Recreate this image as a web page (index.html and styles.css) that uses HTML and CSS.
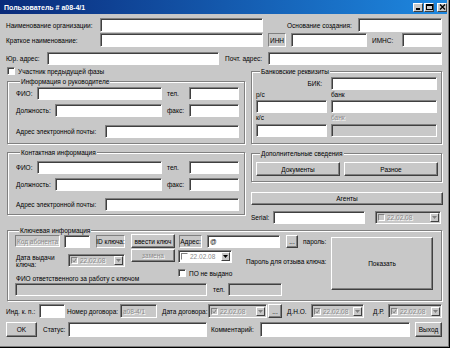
FILE: index.html
```html
<!DOCTYPE html>
<html>
<head>
<meta charset="utf-8">
<title>Пользователь</title>
<link rel="stylesheet" href="styles.css">
</head>
<body>
<div class="win">
  <div class="title">
    <span class="caption">Пользователь # а08-4/1</span>
    <div class="tbtns">
      <span class="tb"><svg width="7" height="6"><rect x="1" y="4" width="4" height="2" fill="#000"/></svg></span>
      <span class="tb"><svg width="7" height="6"><rect x="0.5" y="0.5" width="6" height="5" fill="none" stroke="#000"/><rect x="0" y="0" width="7" height="2" fill="#000"/></svg></span>
      <span class="tb close"><svg width="7" height="6"><path d="M1 0.5l5 5M6 0.5l-5 5" stroke="#000" stroke-width="1.3"/></svg></span>
    </div>
  </div>

  <div class="content">
    <div class="row top1">
      <span class="lb l-org">Наименование организации:</span>
      <span class="in i-org"></span>
      <span class="lb l-osn">Основание создания:</span>
      <span class="in i-osn"></span>
    </div>
    <div class="row top2">
      <span class="lb l-org">Краткое наименование:</span>
      <span class="in i-org"></span>
      <span class="box b-inn">ИНН</span>
      <span class="in i-inn"></span>
      <span class="lb l-imns">ИМНС:</span>
      <span class="in i-imns"></span>
    </div>
    <div class="row top3">
      <span class="lb l-jur">Юр. адрес:</span>
      <span class="in i-jur"></span>
      <span class="lb l-post">Почт. адрес:</span>
      <span class="in i-post"></span>
    </div>

    <div class="mid">
      <div class="lcol">
        <div class="chkrow"><span class="chk"></span><span class="lb">Участник предыдущей фазы</span></div>

        <div class="grp g-boss">
          <span class="lg">Информация о руководителе</span>
          <div class="row ga"><span class="lb l-fio">ФИО:</span><span class="in i-fio"></span><span class="lb l-tel">тел.</span><span class="in i-tel"></span></div>
          <div class="row gb"><span class="lb l-dol">Должность:</span><span class="in i-dol"></span><span class="lb l-tel">факс:</span><span class="in i-tel"></span></div>
          <div class="row gc"><span class="lb l-mail">Адрес электронной почты:</span><span class="in i-mail"></span></div>
        </div>

        <div class="grp g-cont">
          <span class="lg">Контактная информация</span>
          <div class="row ga"><span class="lb l-fio">ФИО:</span><span class="in i-fio"></span><span class="lb l-tel">тел.</span><span class="in i-tel"></span></div>
          <div class="row gb"><span class="lb l-dol">Должность:</span><span class="in i-dol"></span><span class="lb l-tel">факс:</span><span class="in i-tel"></span></div>
          <div class="row gc2"><span class="lb l-mail">Адрес электронной почты:</span><span class="in i-mail"></span></div>
        </div>
      </div>

      <div class="rcol">
        <div class="grp g-bank">
          <span class="lg">Банковские реквизиты</span>
          <div class="row bk-bik"><span class="lb l-bik">БИК:</span><span class="in i-bank"></span></div>
          <div class="bk-lbs"><span class="lb l-rs">р/с</span><span class="lb">банк</span></div>
          <div class="row bk-in"><span class="in i-rs"></span><span class="in i-bank"></span></div>
          <div class="bk-lbs"><span class="lb l-rs">к/с</span><span class="lb off">банк</span></div>
          <div class="row bk-in2"><span class="in i-rs"></span><span class="in dis i-bank"></span></div>
        </div>

        <div class="grp g-more">
          <span class="lg">Дополнительные сведения</span>
          <div class="row more-btns"><span class="btn b-docs">Документы</span><span class="btn b-misc">Разное</span></div>
        </div>

        <span class="btn b-agents">Агенты</span>

        <div class="row serial">
          <span class="lb l-serial">Serial:</span>
          <span class="in i-serial"></span>
          <span class="dp dis dp-serial"><span class="dchk"></span><span class="dtxt">22.02.08</span><span class="dbtn"><svg width="5" height="3"><path d="M0 0h5L2.5 3z" fill="#808080"/></svg></span></span>
        </div>
      </div>
    </div>

    <div class="grp g-key">
      <span class="lg">Ключевая информация</span>
      <div class="key">
        <div class="kleft">
          <div class="row kr1">
            <span class="box b-kod off">Код абонента</span>
            <span class="in i-kod"></span>
            <span class="box b-id">ID ключа:</span>
            <span class="btn b-vvod">ввести ключ</span>
            <span class="box b-adr">Адрес:</span>
            <span class="in i-adr">@</span>
            <span class="btn b-dots">...</span>
            <span class="lb l-pass">пароль:</span>
          </div>
          <div class="kr2">
            <span class="lb l-date">Дата выдачи<br>ключа:</span>
            <span class="dp dis dp-key"><span class="dchk"><svg width="5" height="5" viewBox="0 0 7 7"><path d="M1 3.5l2 2 3-4.5" stroke="#808080" fill="none" stroke-width="1.4"/></svg></span><span class="dtxt">22.02.08</span><span class="dbtn"><svg width="5" height="3"><path d="M0 0h5L2.5 3z" fill="#808080"/></svg></span></span>
            <span class="btn off b-zam">замена</span>
            <span class="dp dp-new"><span class="dchk"></span><span class="dtxt">22.02.08</span><span class="dbtn"><svg width="5" height="3"><path d="M0 0h5L2.5 3z" fill="#000"/></svg></span></span>
            <span class="lb l-otz">Пароль для отзыва ключа:</span>
          </div>
          <div class="row kr3">
            <span class="lb l-resp">ФИО ответственного за работу с ключом</span>
            <span class="kchk"><span class="chk"></span><span class="lb">ПО не выдано</span></span>
          </div>
          <div class="row kr4">
            <span class="in dis i-resp"></span>
            <span class="lb l-ktel">тел.</span>
            <span class="in dis i-ktel"></span>
          </div>
        </div>
        <span class="btn b-show">Показать</span>
      </div>
    </div>

    <div class="row bot1">
      <span class="lb l-ind">Инд. к. п.:</span>
      <span class="in i-ind"></span>
      <span class="lb l-num">Номер договора:</span>
      <span class="in dis i-num"><span class="off">а08-4/1</span></span>
      <span class="lb l-dd">Дата договора:</span>
      <span class="dp dis dp-dd"><span class="dchk"><svg width="5" height="5" viewBox="0 0 7 7"><path d="M1 3.5l2 2 3-4.5" stroke="#808080" fill="none" stroke-width="1.4"/></svg></span><span class="dtxt">22.02.08</span><span class="dbtn"><svg width="5" height="3"><path d="M0 0h5L2.5 3z" fill="#808080"/></svg></span></span>
      <span class="btn b-dd">...</span>
      <span class="lb l-dno">Д.Н.О.</span>
      <span class="dp dis dp-dno"><span class="dchk"><svg width="5" height="5" viewBox="0 0 7 7"><path d="M1 3.5l2 2 3-4.5" stroke="#808080" fill="none" stroke-width="1.4"/></svg></span><span class="dtxt">22.02.08</span><span class="dbtn"><svg width="5" height="3"><path d="M0 0h5L2.5 3z" fill="#808080"/></svg></span></span>
      <span class="lb l-dr">Д.Р.</span>
      <span class="dp dis dp-dr"><span class="dchk"><svg width="5" height="5" viewBox="0 0 7 7"><path d="M1 3.5l2 2 3-4.5" stroke="#808080" fill="none" stroke-width="1.4"/></svg></span><span class="dtxt">22.02.08</span><span class="dbtn"><svg width="5" height="3"><path d="M0 0h5L2.5 3z" fill="#808080"/></svg></span></span>
    </div>
    <div class="row bot2">
      <span class="btn b-ok">OK</span>
      <span class="lb l-stat">Статус:</span>
      <span class="in i-stat"></span>
      <span class="lb l-comm">Комментарий:</span>
      <span class="in i-comm"></span>
      <span class="btn b-exit">Выход</span>
    </div>
  </div>
</div>
</body>
</html>
```

FILE: styles.css
```css
html, body {margin: 0; padding: 0;}
body {background: #c8c8c8; font-family: "Liberation Sans", Arial, sans-serif; font-size: 6.5px; color: #000;}

.win {width: 450px; height: 348px; box-sizing: border-box; background: #c8c8c8; border-right: 1px solid #000; border-bottom: 1px solid #000; box-shadow: inset -1px -1px #808080; overflow: hidden;}

/* title bar */
.title {height: 14px; margin-right: 2px; padding-left: 4px; display: flex; align-items: center; justify-content: space-between; background: linear-gradient(to right, #0a2a7a, #1e88e0); color: #fff; font-weight: bold; font-size: 7px;}
.tbtns {display: flex; gap: 1px;}
.tb {width: 10px; height: 9px; box-sizing: border-box; background: #c8c8c8; border: 1px solid; border-color: #fff #404040 #404040 #fff; display: flex; align-items: center; justify-content: center;}
.tb.close {margin-left: 2px;}

.content {padding-left: 6px;}

/* basic controls */
.row {display: flex; align-items: center;}
.lb {white-space: nowrap; flex: none;}
.in, .box, .dp, .chk {box-sizing: border-box; border: 1px solid; border-color: #808080 #fff #fff #808080; flex: none;}
.in {height: 13px; background: #fff; box-shadow: inset 1px 1px #404040; padding: 0 2px; display: flex; align-items: center;}
.in.dis {background: #c8c8c8;}
.box {height: 13px; display: flex; align-items: center; justify-content: center; white-space: nowrap;}
.chk {width: 8px; height: 8px; background: #fff; box-shadow: inset 1px 1px #404040;}
.btn {box-sizing: border-box; height: 14px; flex: none; display: flex; align-items: center; justify-content: center; background: #c8c8c8; border: 1px solid; border-color: #fff #404040 #404040 #fff; box-shadow: inset -1px -1px #808080; white-space: nowrap;}
.off {color: #8a8a8a; text-shadow: 1px 1px #fff;}

/* date picker */
.dp {height: 13px; background: #fff; box-shadow: inset 1px 1px #404040; display: flex; align-items: center; padding-left: 2px;}
.dp.dis {background: #c8c8c8;}
.dchk {width: 7px; height: 7px; box-sizing: border-box; border: 1px solid; border-color: #808080 #fff #fff #808080; background: #fff; display: flex; align-items: center; justify-content: center; flex: none;}
.dp.dis .dchk {background: #c8c8c8;}
.dtxt {margin-left: 2px; color: #8a8a8a;}
.dp.dis .dtxt {text-shadow: 1px 1px #fff;}
.dbtn {margin-left: auto; margin-right: 1px; width: 9px; height: 9px; box-sizing: border-box; border: 1px solid; border-color: #fff #404040 #404040 #fff; background: #c8c8c8; display: flex; align-items: center; justify-content: center;}

/* group boxes */
.grp {box-sizing: border-box; border: 1px solid #808080; box-shadow: inset 1px 1px #fff, 1px 1px #fff;}
.grp > .lg {display: block; width: max-content; margin: -4px 0 0 4px; padding: 0 1px; height: 7px; line-height: 7px; background: #c8c8c8; white-space: nowrap;}

/* top rows */
.top1 {margin-top: 4px; height: 14px;}
.top1 .in, .top2 .in, .top2 .box {height: 14px;}
.top2 {margin-top: 1px; height: 14px;}
.top3 {margin-top: 5px; height: 13px;}
.l-org {width: 94px;}
.i-org {width: 163px;}
.l-osn {margin-left: 24px; width: 71px;}
.i-osn {width: 84px;}
.b-inn {margin-left: 5px; width: 18px;}
.i-inn {margin-left: 5px; width: 76px;}
.l-imns {margin-left: 5px; width: 30px;}
.i-imns {width: 40px;}
.l-jur {width: 41px;}
.i-jur {width: 172px;}
.l-post {margin-left: 6px; width: 43px;}
.i-post {width: 174px;}

/* middle block */
.mid {display: flex; margin-top: 2px;}
.lcol {margin-left: 1px; width: 238px; flex: none;}
.chkrow {display: flex; align-items: center; height: 8px; gap: 3px;}
.g-boss {margin-top: 6px; padding: 0 0 5px 8px;}
.g-cont {margin-top: 8px; padding: 0 0 3px 8px;}
.ga {margin-top: 2px;}
.g-cont .ga {margin-top: 5px;}
.gb {margin-top: 4px;}
.gc {margin-top: 8px;}
.gc2 {margin-top: 7px;}
.l-fio {width: 21px;}
.i-fio {width: 125px;}
.l-tel {margin-left: 5px; width: 22px;}
.i-tel {width: 50px;}
.l-dol {width: 39px;}
.i-dol {width: 107px;}
.l-mail {width: 89px;}
.i-mail {width: 134px;}

.rcol {margin-left: 6px; width: 192px; flex: none;}
.g-bank {margin-top: 4px; width: 191px; padding: 0 0 6px 4px;}
.bk-bik {margin-top: 2px; gap: 4px;}
.l-bik {width: 71px; text-align: right; padding-right: 5px; box-sizing: border-box;}
.bk-lbs {display: flex; gap: 4px; margin-top: 1px; height: 8px; line-height: 8px;}
.bk-in {margin-top: 1px; gap: 4px;}
.bk-in2 {margin-top: 2px; gap: 4px;}
.l-rs {width: 71px;}
.i-rs {width: 71px;}
.i-bank {width: 106px;}
.g-more {margin-top: 9px; width: 191px; padding: 0 0 5px 4px;}
.more-btns {margin-top: 5px; gap: 4px;}
.b-docs {width: 84px;}
.b-misc {width: 94px;}
.b-agents {margin-top: 10px; width: 192px; height: 13px;}
.serial {margin-top: 6px;}
.l-serial {width: 22px;}
.i-serial {width: 92px;}
.dp-serial {margin-left: 10px; width: 66px;}

/* key block */
.g-key {margin: 6px 0 0 1px; width: 435px; padding: 0 0 4px 7px;}
.key {display: flex;}
.kleft {width: 316px; flex: none;}
.kr1 {height: 14px;}
.b-kod {width: 45px; height: 12px;}
.i-kod {margin-left: 4px; width: 26px;}
.b-id {margin-left: 6px; width: 29px;}
.b-vvod {margin-left: 6px; width: 44px;}
.b-adr {margin-left: 4px; width: 23px;}
.i-adr {margin-left: 5px; width: 73px;}
.b-dots {margin-left: 6px; width: 12px; height: 13px;}
.l-pass {margin-left: 5px;}
.kr2 {display: flex; align-items: flex-start; height: 20px;}
.l-date {width: 53px; margin-top: 6px; line-height: 7px; padding-left: 1px; box-sizing: border-box; flex: none;}
.dp-key {margin-top: 6px; width: 57px;}
.b-zam {margin: 1px 0 0 6px; width: 44px; height: 13px;}
.dp-new {margin: 2px 0 0 3px; width: 54px;}
.l-otz {margin: 10px 0 0 14px;}
.kr3 {height: 14px; align-items: flex-start;}
.l-resp {width: 163px; align-self: flex-end; padding-left: 1px; box-sizing: border-box;}
.kchk {display: flex; align-items: center; gap: 3px; margin-top: 1px;}
.kr4 {margin-top: 1px;}
.i-resp {width: 192px;}
.l-ktel {margin-left: 6px; width: 15px;}
.i-ktel {width: 54px;}
.b-show {margin-top: 3px; width: 102px; height: 53px;}

/* bottom rows */
.bot1 {margin-top: 3px; height: 14px;}
.bot1 .in, .bot1 .dp {height: 14px;}
.l-ind {width: 33px;}
.i-ind {width: 26px;}
.l-num {margin-left: 2px; width: 53px;}
.i-num {width: 37px;}
.l-dd {margin-left: 5px; width: 46px;}
.dp-dd {width: 59px;}
.b-dd {margin-left: 1px; width: 14px;}
.l-dno {margin-left: 5px; width: 24px;}
.dp-dno {width: 53px;}
.l-dr {margin-left: 9px; width: 15px;}
.dp-dr {width: 54px;}
.bot2 {margin-top: 4px; height: 15px;}
.bot2 .in, .bot2 .btn {height: 15px;}
.b-ok {width: 31px;}
.l-stat {margin-left: 6px; width: 25px;}
.i-stat {width: 139px;}
.l-comm {margin-left: 4px; width: 49px;}
.i-comm {width: 150px;}
.b-exit {margin-left: 5px; width: 27px;}
```
